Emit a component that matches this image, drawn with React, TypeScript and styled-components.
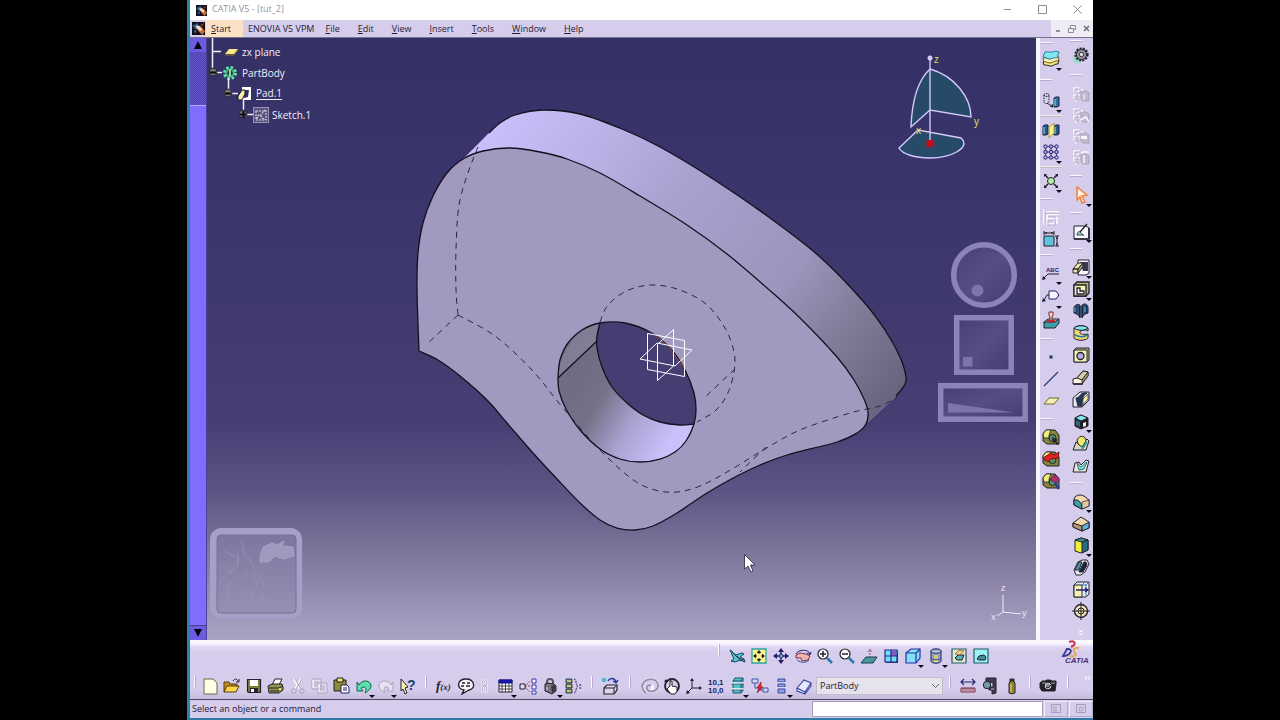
import React from "react";
import styled, { createGlobalStyle, css } from "styled-components";

type Pt = [number, number];

/* Smooth curve through a list of points, as cubic segments. */
const curve = (pts: Pt[], first = true): string => {
  let d = first ? `M${pts[0][0]} ${pts[0][1]}` : `L${pts[0][0]} ${pts[0][1]}`;
  for (let i = 0; i < pts.length - 1; i++) {
    const a = pts[i - 1] ?? pts[i];
    const b = pts[i];
    const c = pts[i + 1];
    const e = pts[i + 2] ?? c;
    const x1 = b[0] + (c[0] - a[0]) / 6;
    const y1 = b[1] + (c[1] - a[1]) / 6;
    const x2 = c[0] - (e[0] - b[0]) / 6;
    const y2 = c[1] - (e[1] - b[1]) / 6;
    d += `C${x1} ${y1} ${x2} ${y2} ${c[0]} ${c[1]}`;
  }
  return d;
};

const Global = createGlobalStyle`
  *, *::before, *::after { box-sizing: border-box; }
  body { margin: 0; background: #000; font-family: "Open Sans", "Noto Sans", sans-serif; color: #1c1833; }
  button, input, select { font: inherit; color: inherit; margin: 0; padding: 0; border: 0; border-radius: 0; background: none; }
`;

const lavender = "#d6cdec";

const Desktop = styled.div`
  min-height: 100vh;
  padding: 0 187px;
  display: flex;
  background: #000;
`;

const AppWindow = styled.div`
  flex: 1;
  min-width: 0;
  display: flex;
  flex-direction: column;
  background: ${lavender};
  border-left: 3px solid #2b83a6;
  border-bottom: 2px solid #2f7ba6;
  font-size: 9px;
  line-height: 12px;
`;

const TitleBar = styled.header`
  display: flex;
  align-items: center;
  height: 20px;
  padding-left: 6px;
  background: #fff;
  color: #95939b;
`;

const Title = styled.h1`
  flex: 1;
  margin: 0 0 2px 5px;
  font-size: 9px;
  line-height: 12px;
  font-weight: 400;
`;

const CaptionButton = styled.button`
  width: 32px;
  height: 18px;
  margin: 0 0 2px 3px;
  display: flex;
  align-items: center;
  justify-content: center;
`;

const MenuBar = styled.nav`
  display: flex;
  align-items: stretch;
  height: 18px;
  border-bottom: 1px solid #77708f;
`;

const MenuLogo = styled.span`
  width: 16px;
  display: flex;
  align-items: center;
  justify-content: center;
`;

const MenuItem = styled.button<{ $kind?: "start" | "wide" }>`
  padding: 0 9px;
  color: #221c38;
  ${(p) => p.$kind === "start" && css`padding: 0 12px 0 5px; background: #fbe2c4;`}
  ${(p) => p.$kind === "wide" && css`padding: 0 2px 0 5px;`}
`;

const MenuSpace = styled.span`
  flex: 1;
`;

const ChildButton = styled.button`
  width: 14px;
  background: #efecf6;
  display: flex;
  align-items: center;
  justify-content: center;
`;

const Work = styled.div`
  flex: 1;
  display: flex;
  min-height: 0;
`;

const TreeScroll = styled.div`
  width: 17px;
  display: flex;
  flex-direction: column;
  background: #806cff;
  border-right: 1px solid #4a4192;
`;

const ScrollButton = styled.button`
  height: 14px;
  display: flex;
  align-items: center;
  justify-content: center;
  background: #6b5ce0;
`;

const ScrollDither = styled.div`
  height: 54px;
  border-bottom: 1px solid #b8aeff;
  background: repeating-conic-gradient(#4b40a8 0 25%, #6456cf 0 50%) 0 0 / 2px 2px;
`;

const ScrollThumb = styled.div`
  flex: 1;
  border-bottom: 1px solid #4a4192;
`;

const Viewport = styled.main`
  flex: 1;
  min-width: 0;
  position: relative;
  background: linear-gradient(#353064 0%, #39346a 22%, #403a6f 48%, #463f74 64%, #5b5484 75%, #7c7499 85%, #a29bbd 97%, #a9a2c3 100%);
`;

const Scene = styled.svg`
  position: absolute;
  inset: 0;
  width: 100%;
  height: 100%;
`;

const Tree = styled.ul`
  position: absolute;
  top: 0;
  left: 0;
  margin: 0;
  padding: 3px 0 0;
  list-style: none;
  color: #f1eefb;
  font-size: 10px;
  line-height: 14px;
`;

const TreeLines = styled.svg`
  position: absolute;
  top: 0;
  left: 0;
`;

const TreeRow = styled.li<{ $indent: number }>`
  display: flex;
  align-items: center;
  gap: 3px;
  height: 21px;
  padding-left: ${(p) => p.$indent}px;
`;

const TreeLabel = styled.span<{ $current?: boolean }>`
  ${(p) => p.$current && css`border-bottom: 1px solid #f1eefb; line-height: 12px;`}
`;

const Side = styled.aside`
  display: flex;
  gap: 8px;
  padding-right: 1px;
  border-left: 4px solid #f7f5fd;
`;

const ToolColumn = styled.div`
  width: 22px;
  display: flex;
  flex-direction: column;
`;

const Tool = styled.button<{ $w?: number; $h?: number }>`
  position: relative;
  flex: none;
  width: ${(p) => p.$w ?? 22}px;
  height: ${(p) => p.$h ?? 22}px;
  display: flex;
  align-items: center;
  justify-content: center;
`;

const DropMark = styled.i`
  position: absolute;
  right: 0;
  bottom: -1px;
  border: 3px solid transparent;
  border-top-color: #0d0a1c;
  border-bottom: 0;
`;

const Grip = styled.div<{ $size: number; $across?: boolean }>`
  flex: none;
  display: flex;
  align-items: center;
  ${(p) =>
    p.$across
      ? css`height: ${p.$size}px;`
      : css`width: ${p.$size}px; justify-content: center; align-self: flex-start; padding-top: 4px;`}
  &::after {
    content: "";
    background: #fbfaff;
    ${(p) =>
      p.$across
        ? css`width: 12px; height: 2px; border-bottom: 1px solid #b5acd0;`
        : css`width: 2px; height: 12px; border-right: 1px solid #b5acd0;`}
  }
`;

const Rule = styled.div`
  flex: none;
  height: 1px;
  margin: 3px 0;
  background: #f3eadf;
  box-shadow: 0 1px 0 #c3b8cc;
`;

const Bottom = styled.div`
  display: flex;
  flex-direction: column;
  height: 59px;
  background: linear-gradient(#fdfcff 0, #f6f2fd 4px, #dfd7f2 7px, ${lavender} 12px, ${lavender} 50px, #c5bcdc 59px);
`;

const ToolRow = styled.div<{ $end?: boolean }>`
  display: flex;
  align-items: center;
  height: ${(p) => (p.$end ? 32 : 27)}px;
  ${(p) => p.$end && css`justify-content: flex-end; padding: 0 1px 0 0;`}
`;

const LogoSlot = styled.div`
  width: 100px;
  display: flex;
  justify-content: flex-end;
  align-self: flex-start;
`;

const Picker = styled.label`
  position: relative;
  display: flex;
  align-items: center;
  width: 127px;
  height: 18px;
  margin-left: 1px;
  border: 1px solid #c2bccf;
  background: #e7e3ec;
  svg { position: absolute; right: 2px; pointer-events: none; }
`;

const PickerSelect = styled.select`
  appearance: none;
  width: 100%;
  height: 100%;
  padding-left: 3px;
  font-size: 9px;
`;

const More = styled.span<{ $column?: boolean }>`
  display: flex;
  justify-content: center;
  ${(p) => (p.$column ? css`margin-top: 8px; transform: rotate(90deg);` : css`margin-left: auto; margin-right: 2px; margin-top: -16px;`)}
`;

const StatusBar = styled.footer`
  display: flex;
  align-items: center;
  height: 19px;
  padding-left: 2px;
  border-top: 1px solid #4d4663;
`;

const StatusText = styled.span`
  flex: 1;
`;

const CommandInput = styled.input`
  width: 231px;
  height: 16px;
  background: #fff;
  border: 1px solid #a8a0bd;
  padding: 0 3px;
`;

const StatusButton = styled.button`
  width: 24px;
  height: 16px;
  margin-left: 1px;
  border: 1px solid #b3aaca;
  border-top-color: #f2effa;
  border-left-color: #f2effa;
  display: flex;
  align-items: center;
  justify-content: center;
`;

const K = "#23212e";
const N = "#20206e";
const T = "#3f9fa6";
const C = "#7fe6f0";
const Y = "#f6f3b4";
const G = "#aba4bc";
const W = "#f8f6ff";

const greyBox = (extra: React.ReactNode) => (
  <g>
    <path d="M9 5h5l3 2v8h-6l-2-2z" fill="#c0b9cf" stroke={G} />
    <path d="M2 2h5v4H2zM7 4h4M4 6v9h5M2 9h5v3H2z" stroke={W} strokeWidth="1.6" />
    <path d="M3 3h5v4H3zM5 8v7h4M3 10h4v3H3z" stroke={G} strokeWidth=".8" />
    {extra}
  </g>
);

const bolt = (tip: React.ReactNode) => (
  <g>
    <path d="M1 6l3-4h9l4 5v9H5l-4-3z" fill="#84853a" stroke={K} />
    <path d="M1 6l3-4h5L7 7v3H2z" fill="#f2ee7a" stroke={K} strokeWidth=".8" />
    <circle cx="10.500" cy="10" r="3.500" fill="#5d8f69" stroke={K} />
    {tip}
  </g>
);

const icons: Record<string, React.ReactNode> = {
  layers: (<>
    <path d="M1 12c3-2 5 1 8-1s4-2 8-1l-1 4c-3-1-5 3-8 2s-4-1-6-1z" fill="#f7e783" stroke={K} />
    <path d="M1 8c3-1 5 2 8 0s4-2 8-1l-1 4c-3-1-5 2-8 2s-4-2-6-1z" fill={Y} stroke="#746220" />
    <path d="M3 2c3-1 5 1 7 0s4-1 7 0l-2 6c-3-1-4 1-7 1S4 7 1 7z" fill={C} stroke="#2b7da0" />
  </>),
  translate: (<>
    <path d="M2 3c0-2 5-2 5 0v7c0 2-5 2-5 0zM2 3c0 2 5 2 5 0" stroke={K} strokeDasharray="1.5 1" />
    <path d="M5 11l6 4M11 15l-3-1M11 15l-1-3" stroke={K} />
    <path d="M12 6l2-1h3v9l-2 1h-3z" fill="#2d6fa6" stroke={K} /><path d="M13 7v7" stroke={C} />
  </>),
  mirror: (<>
    <path d="M1 5l2-1h3v9l-2 1H1zM12 5l2-1h3v9l-2 1h-3z" fill="#225b94" stroke={K} />
    <path d="M2 6v7M13 6v7" stroke={C} /><path d="M7 6l5-4v10l-5 5z" fill="#f3ef8d" stroke="#a99d49" />
  </>),
  pattern: (<>
    <path d="M3.500 2v14M9 2v14M14.500 2v14M2 3.500h14M2 9h14M2 14.500h14" stroke={N} strokeWidth=".8" />
    {[3.5, 9, 14.5].map((x) => [3.5, 9, 14.5].map((y) => <circle key={x + "-" + y} cx={x} cy={y} r="1.700" fill="#b9b2e6" stroke={N} />))}
  </>),
  scale: (<>
    <path d="M3 3l3 3M15 3l-3 3M3 15l3-3M15 15l-3-3" stroke={K} strokeWidth="1.500" />
    <path d="M2 2h3L2 5zM16 2v3l-3-3zM2 16v-3l3 3zM16 16h-3l3-3z" fill={K} />
    <circle cx="9" cy="9" r="3.500" fill="#b5efa1" stroke={K} />
  </>),
  dimGrey: (<>
    <path d="M2 4h15M2 1v16M5 7h12M5 7v10M5 11h7v5H5zM15 8v8" stroke={W} strokeWidth="1.800" />
    <path d="M3 5h14M3 2v15M6 8h11M6 12h7v5H6z" stroke={G} strokeWidth=".8" />
  </>),
  dimension: (<>
    <path d="M2 6h10v10H2z" fill="#5fc3dc" stroke={K} /><path d="M2 1v4M12 1v4M2 3h10M13 6h4M13 16h4M15 6v10" stroke={K} />
    <path d="M2 3l3-1v2zM12 3l-3-1v2zM15 6l-1 3h2zM15 16l-1-3h2z" fill={K} />
  </>),
  abc: (<>
    <text x="4" y="9" fontSize="6" fill={N} fontFamily="Liberation Sans" fontWeight="700">ABC</text>
    <path d="M17 11H6l-4 4" stroke={K} /><path d="M0 17l1-4 3 3z" fill={K} />
  </>),
  flag: (<><path d="M7 4h7l3 4-3 4H7z" fill={W} stroke={N} /><path d="M7 8H5l-3 5" stroke={K} /><path d="M0 15l1-4 3 3z" fill={K} /></>),
  stamp: (<>
    <path d="M2 11l4-3h11l-4 4H2z" fill="#88d8df" stroke={K} /><path d="M2 11h11l4-3v4l-4 5H2z" fill={T} stroke={K} />
    <path d="M7 1h4v3l-1 2v4H8V6L7 4z" fill="#f7d7cf" stroke="#7d1c1c" /><path d="M5 10h8" stroke="#c62828" strokeWidth="2" />
  </>),
  point: <rect x="7.500" y="7.500" width="3" height="3" fill="#1c3566" />,
  line: <path d="M2 16L16 2" stroke="#22407a" strokeWidth="1.300" />,
  plane: <path d="M2 12l5-6h10l-5 6z" fill="#f5efb2" stroke="#6f6832" />,
  boltA: bolt(<path d="M10 9l6 3-2 1 3 3-2 1-2-3-2 1z" fill={K} />),
  boltB: bolt(<path d="M1 8l8-5 3 2 5-3-1 6-7 1-3 3z" fill="#dd2424" stroke="#7d1212" />),
  boltC: bolt(<><path d="M9 8c0-6 8-5 8-1s-5 4-8 1z" fill="#b92d60" stroke="#3c2b86" /><path d="M13 11l4 6" stroke="#2b3c9c" strokeWidth="2.500" /></>),
  gear: (<>
    <path d="M1 9h5l2 8H2z" fill="#8fe0c2" /><circle cx="9.500" cy="8.500" r="6" fill="#aaa6b0" stroke={K} strokeWidth="2.200" strokeDasharray="2 1.200" />
    <circle cx="9.500" cy="8.500" r="5" fill="#9c98a5" stroke={K} /><circle cx="9.500" cy="8.500" r="2.200" fill="#e9e6f0" stroke={K} />
  </>),
  greyA: greyBox(<path d="M12 8v6" stroke={W} />),
  greyB: greyBox(<path d="M8 13l6-3 3 5" stroke={W} strokeWidth="1.600" />),
  greyC: greyBox(<path d="M9 8h6v3H9z" fill={W} />),
  greyD: greyBox(<path d="M10 3h7M12 6v8" stroke={W} strokeWidth="1.500" />),
  select: <path d="M5 1l10 8-5 1 3 6-3 1-2-6-3 3z" fill="#fff1e4" stroke="#ef7f3b" strokeWidth="1.500" />,
  sketch: (<>
    <path d="M2 4h12l3 2v11H2z" fill={W} stroke={K} /><path d="M2 17h15V6" stroke={K} strokeWidth="1.600" />
    <path d="M5 13c0-4 3-4 4-2s3 2 3 2z" fill="#9bd0c0" stroke="#285b54" /><path d="M8 10l7-8" stroke={K} strokeWidth="1.400" />
  </>),
  pad: (<><path d="M6 2h11v13l-3 2H6z" fill={W} stroke={K} /><path d="M8 4h8v9h-5z" fill="#3a3954" /><path d="M1 11l5-6h5l-5 6zM1 11h5v4H1z" fill="#eeeab0" stroke={K} /><path d="M6 11l5-6v4l-5 6z" fill="#a7a36c" stroke={K} /></>),
  pocket: (<><path d="M2 5l3-3h12v11l-3 3H2z" fill="#b9b575" stroke={K} strokeWidth="1.300" /><path d="M2 5h12v11H2z" fill={Y} stroke={K} strokeWidth="1.300" /><path d="M5 8h3v3h4v3H5z" fill="#f8f6ff" stroke={K} strokeWidth="1.300" /></>),
  shaft: (<><path d="M2 5c2-3 4-3 6-2v13c-1-3-3-4-6-5zM10 3c3-2 5-1 6 2v6c-3 1-5 2-6 5z" fill="#2d5480" stroke={K} /><path d="M8 4v11M10 4v11M4 4v7M14 4v7" stroke="#0c1b33" /><path d="M3 5v5M13 5v5" stroke={C} strokeWidth=".8" /></>),
  groove: (<><path d="M2 4c3-3 11-3 14 0v3c-3-2-7-1-8 1s3 3 8 2v4c-3 3-11 3-14 0z" fill="#f3da74" stroke={K} /><path d="M2 4c3-3 11-3 14 0-3 3-11 3-14 0z" fill={C} stroke={K} /><path d="M3 11c4 2 9 2 12 0" stroke="#267f91" strokeWidth="1.600" /></>),
  hole: (<><path d="M2 4l2-2h13v12l-2 2H2z" fill="#b3b07a" stroke={K} /><path d="M2 4h13v12H2z" fill={Y} stroke={K} /><circle cx="8.500" cy="10" r="3.500" fill="#b2aedf" stroke={K} strokeWidth="1.300" /></>),
  rib: (<><path d="M1 11l4-1 6-7 5 1v4l-6 8H1z" fill="#fbf7e0" stroke={K} /><path d="M5 10l6-7 5 1-6 8z" fill="#d8cda0" stroke={K} /><path d="M10 12l6-8v4l-6 7z" fill="#a79d70" stroke={K} strokeWidth=".7" /><path d="M1 16h10" stroke={K} strokeWidth="1.500" /></>),
  slot: (<><path d="M1 8l7-6h9v8l-7 7H1z" fill="#e7e5ed" stroke={K} /><path d="M4 8c4 0 3-4 8-5h3c-4 2-4 5-5 8v5H6z" fill="#23375c" stroke={K} /><path d="M11 9l5-5v5l-5 6z" fill={Y} stroke={K} strokeWidth=".7" /></>),
  cube: (<><path d="M3 6l6-3 7 3v8l-7 3-6-3z" fill="#1c1b2c" stroke={K} /><path d="M3 6l6-3 7 3-7 3z" fill={C} stroke={K} /><path d="M4 8l4 2v5l-4-2z" fill="#2a6f74" /><path d="M11 11l3-1v4l-3 1z" fill="#f2efbc" /></>),
  loft: (<><path d="M1 16l3-8 4 3 7-6 2 2-3 9z" fill="#d9d6bd" stroke={K} /><path d="M5 6c3-6 9-4 9 1l-4 6-4-3z" fill="#f1e96d" stroke={K} /><path d="M10 15l5-7" stroke="#2f9aa6" strokeWidth="2" /></>),
  loftCut: (<><path d="M1 16l2-9 4-1 2 3 5-5 3 1-3 11z" fill="#eae7d2" stroke={K} /><path d="M5 7c2 0 2 4 4 4s4-5 6-5l-3 7-5 1z" fill={C} stroke="#26717d" /></>),
  fillet: (<><path d="M2 8c0-5 6-6 10-4l5 4v6l-7 3-8-4z" fill="#f4d7ab" stroke={K} /><path d="M2 8c4-1 8 2 8 9l-8-4z" fill={T} stroke={K} /><path d="M10 10l7-2v6l-7 3z" fill="#dfc79e" stroke={K} strokeWidth=".7" /></>),
  chamfer: (<><path d="M1 9l8-6 8 5v6l-7 3-9-4z" fill="#f4d7ab" stroke={K} /><path d="M1 9l9 3v5l-9-4z" fill="#b8966f" stroke={K} /><path d="M10 12l7-4v6l-7 3z" fill="#5eb3d3" stroke={K} /></>),
  draft: (<><path d="M3 4l6-2 7 2v10l-7 3-6-2z" fill="#f1ee33" stroke={K} /><path d="M3 4l6-2 7 2-6 2z" fill="#41979f" stroke={K} /><path d="M10 6l6-2v10l-6 3z" fill="#256f83" stroke={K} /></>),
  shell: (<><path d="M2 12l4-8 4-2h5l2 4-4 8-4 3H4z" fill="#eceaf2" stroke={K} /><path d="M3 12l4-8h3l-3 8z" fill={T} stroke={K} /><path d="M7 14l5-10h2l1 3-4 7z" fill="#251f43" stroke={K} /></>),
  thickness: (<><path d="M2 5l3-3h12v12l-3 3H2z" fill="#e9f0f4" stroke={K} /><path d="M2 5h8v12H2z" fill={Y} stroke={K} /><path d="M10 5h4v12M10 5l3-3M14 5l3-3" stroke="#4974a1" /><path d="M4 10h12M13 8l3 2-3 2" stroke={N} strokeWidth="1.300" /></>),
  target: (<><circle cx="9" cy="9" r="6.500" fill="#f6e6b6" stroke={K} strokeWidth="1.400" /><circle cx="9" cy="9" r="3" stroke={K} /><path d="M9 0v18M0 9h18" stroke={K} /></>),
  file: (<path d="M3 2h9l4 4v11H3z" fill="#fffde5" stroke="#6b683f" />),
  open: (<><path d="M1 15V5h5l1 2h7v3" fill="#c98a1b" stroke="#4d3d0c" /><path d="M1 15l3-6h12l-3 6z" fill="#ffd54c" stroke="#4d3d0c" /><path d="M10 4c2-3 4-2 5 0M16 2v3h-3" stroke={K} /></>),
  save: (<><path d="M2.500 2.500h13v13h-12l-1-1z" fill="#7a8035" stroke={K} strokeWidth="1.200" /><path d="M5 3h8v6H5z" fill="#fff" /><path d="M5 11h8v4H5z" fill={K} /><path d="M6 12h3v3H6z" fill="#fff" /></>),
  print: (<><path d="M5 8l3-6h7l-3 6z" fill="#fff" stroke={K} /><path d="M1 9l4-2h10l1 3v3l-4 3H2z" fill="#93954b" stroke={K} /><path d="M2 11h10l4-2M3 14h9" stroke={K} /><path d="M12 12h2" stroke="#ffe042" strokeWidth="2" /></>),
  cut: (<><path d="M5 2l6 10M12 2L6 12" stroke={W} strokeWidth="2.400" /><path d="M6 2l6 10M13 2L7 12" stroke={G} /><circle cx="5" cy="14" r="2.300" stroke={G} /><circle cx="13" cy="14" r="2.300" stroke={G} /></>),
  copy: (<><path d="M1 2h9v10H1zM7 6h9v10H7z" fill="#e4def0" stroke={G} /><path d="M3 5h5M3 7h4M3 9h3M9 9h5M9 11h5M9 13h5" stroke={G} /><path d="M2 3v8M8 7v8" stroke={W} /></>),
  paste: (<><path d="M1 3h12v11H1z" fill="#8c8c35" stroke={K} /><path d="M4 1h6v4H4z" fill="#f1e46f" stroke={K} /><path d="M8 8h6l2 2v6H8z" fill="#fff" stroke={N} /><path d="M10 11h4M10 13h4" stroke={N} /></>),
  undo: (<path d="M4 8c3-6 12-5 12 1 0 3-3 5-6 7 2-4 1-8-4-5l2 3H2V5z" fill="#5ce0ab" stroke="#16604b" />),
  redo: (<path d="M14 8C11 2 2 3 2 9c0 3 3 5 6 7-2-4-1-8 4-5l-2 3h6V5z" fill="#e8e2f3" stroke={G} />),
  help: (<><path d="M2 2l7 8-3 1 2 5-2 1-2-5-2 2z" fill={Y} stroke={K} /><text x="8" y="13" fontSize="14" fontWeight="700" fill="#1d416f" fontFamily="Liberation Sans">?</text></>),
  formula: (<text x="1" y="13" fontSize="13" fontStyle="italic" fontWeight="700" fill={K} fontFamily="Liberation Serif">f<tspan fontSize="9">(x)</tspan></text>),
  comment: (<><path d="M7 13C-1 12 0 2 9 2s10 10 3 11l-7 4z" fill="#f5f1f7" stroke={K} strokeWidth="1.300" /><path d="M5 6h3M10 6h3M4 9h3M9 9h4" stroke={K} strokeWidth="1.400" /></>),
  chain: (<><rect x="6" y="2" width="5" height="7" rx="2.500" stroke={W} strokeWidth="2.400" /><rect x="6" y="9" width="5" height="7" rx="2.500" stroke={W} strokeWidth="2.400" /><rect x="6" y="2" width="5" height="7" rx="2.500" stroke={G} /><rect x="6" y="9" width="5" height="7" rx="2.500" stroke={G} /></>),
  table: (<><path d="M3 3h13v12H3z" fill="#fff" stroke={K} /><path d="M3 3h13v3H3z" fill="#1717a6" stroke="#1717a6" /><path d="M3 9h13M3 12h13M6 6v9M9.500 6v9M13 6v9" stroke={K} strokeWidth=".8" /></>),
  structure: (<><path d="M1 7h5v5H1z" fill="#e4def0" stroke={K} /><path d="M6 9l5-5M6 9h5M6 10l5 5" stroke="#a83457" strokeDasharray="2 1" /><path d="M13 2h4v4h-4zM13 8h4v4h-4zM13 14h4v3h-4z" fill={W} stroke="#3838a8" /></>),
  lock: (<><path d="M5 8V5c0-4 6-4 6 0v3" stroke="#58545f" strokeWidth="2" /><path d="M3 7l3-1 6 1 2 2v5l-4 3-7-3z" fill="#77727c" stroke={K} /><path d="M9 9l4-1v6l-3 2z" fill="#3a363f" /><path d="M5 10v3" stroke="#e5e0ea" /></>),
  tree: (<><path d="M1 2h6v4H1zM1 7h6v4H1zM1 12h6v4H1z" fill="#619b9a" stroke={K} strokeWidth=".8" /><path d="M2 4h4M2 9h4M2 14h4" stroke="#ead564" strokeWidth="1.500" /><path d="M9 2c3 0 1 6 4 7-3 1-1 7-4 7M14 8h3M14 11h3" stroke={N} strokeDasharray="2 .700" /></>),
  rotateBox: (<><path d="M3 11l3-3h10v5l-3 4H3z" fill="#dcd6ea" stroke={K} strokeWidth="1.200" /><path d="M3 11h10v6M13 11l3-3" stroke={K} /><circle cx="3" cy="3" r="2.300" fill="#53b9ce" /><path d="M7 4c2-4 7-3 8 1M15 6l-3-2M15 6l2-3" stroke="#2c37a8" strokeWidth="1.400" /></>),
  swirl: (<><path d="M10 9c-2-2-5 0-4 3 2 4 10 3 11-3C17 2 8 0 3 5c-3 3-2 9 2 11M10 9c2 0 2 3 0 3" stroke={W} strokeWidth="3" /><path d="M10 9c-2-2-5 0-4 3 2 4 10 3 11-3C17 2 8 0 3 5c-3 3-2 9 2 11" stroke="#9991ab" strokeWidth="2" /></>),
  hand: (<><circle cx="9" cy="9" r="7" stroke={K} strokeWidth="1.800" /><path d="M7 9V4h2v5l5 1v4l-2 3H8l-4-5 1-1z" fill="#fff" stroke={K} /><path d="M1 5l2-3 2 3z" fill={K} /></>),
  axis: (<><path d="M7 2v9h9M7 11l-5 5" stroke={K} /><path d="M7 1L5 4h4zM17 11l-3-2v4zM1 17l1-4 3 3z" fill={K} /></>),
  numbers: (<text fontSize="8" fontFamily="Liberation Sans" fontWeight="700" fill={N}><tspan x="1" y="8">10,1</tspan><tspan x="1" y="16">10,0</tspan></text>),
  section: (<><path d="M4 4l2-3h8v12l-2 3H4z" fill="#4dc5cb" stroke="#225066" /><path d="M4 4h8v12M12 4l2-3" stroke="#225066" /><path d="M2 6h13M2 12h13" stroke={W} strokeWidth="1.300" /><path d="M2 7h13M2 13h13" stroke={K} strokeWidth=".5" /></>),
  flash: (<><path d="M1 2h6v4H1zM12 11h5v4h-5z" fill="#d7d8f3" stroke="#3d55a7" /><path d="M4 6v5h3M9 13h3" stroke="#3d55a7" /><path d="M10 5l-4 6h2l-2 5 6-6h-2z" fill="#dd2929" stroke="#8e1515" strokeWidth=".7" /></>),
  stack: (<><path d="M5 2h7v3H5zM5 7h7v3H5zM5 12h7v4H5z" fill="#8fa3df" stroke="#3d44a0" /><path d="M5 5.500h8M5 10.500h8" stroke={W} strokeWidth=".7" /></>),
  eraser: (<path d="M2 11L9 3l7 3-6 9zM2 11v3l8 3v-2M16 6v3l-6 8M2 11l8 4" fill="#e6e6fb" stroke="#3442a1" strokeWidth="1.100" />),
  ruler: (<><path d="M2 5h14M5 2L2 5l3 3M13 2l3 3-3 3" stroke="#26266e" strokeWidth="1.200" /><path d="M2 11h14v4H2z" fill="#f2c8ca" stroke="#69284b" /><path d="M4 11v3M6 11v3M8 11v3M10 11v3M12 11v3M14 11v3" stroke="#69284b" strokeWidth=".8" /></>),
  caliper: (<><path d="M5 1h10v15l-4 1v-4H8v-3h4V5L5 7z" fill="#3e3c48" stroke={K} /><circle cx="6" cy="8" r="3.700" fill="#7898ab" stroke={K} /><path d="M10 12h3" stroke="#b8b3c0" /></>),
  weight: (<><path d="M7 2h4v3H7z" fill="#585421" stroke={K} /><path d="M6 6l2-2h2l2 2v10c-2 1-4 1-6 0z" fill="#948431" stroke={K} /><path d="M8 7v8" stroke="#d6c96e" strokeWidth="1.300" /></>),
  camera: (<><path d="M1 6l2-2h3l2-1h3l2 1h4v3l-1 7H3L1 11z" fill="#242229" stroke={K} /><circle cx="9" cy="9" r="2.800" fill="#8a8690" stroke="#dcd8e3" /><path d="M7 10l2 1 3-3" stroke={K} /><path d="M3 6h4M12 6h4" stroke="#aaa6b1" /></>),
  fly: (<><path d="M2 3c2 0 3 4 6 5l6-2 2 1-4 3 4 2 1 3-5-2-5 2-4-1 3-2z" fill="#54c9d6" stroke="#12455c" /><path d="M4 5l6 6 6 2M9 9l4 5" stroke={K} strokeWidth=".8" /></>),
  fitAll: (<><path d="M2 2h14v14H2z" fill="#fbf788" stroke="#2ba3a3" strokeWidth="1.300" /><path d="M9 5v2M9 11v2M5 9h2M11 9h2" stroke={K} /><path d="M9 3L6.500 6h5zM9 15l-2.500-3h5zM3 9l3-2.500v5zM15 9l-3-2.500v5z" fill={K} /></>),
  pan: (<><path d="M9 2v14M2 9h14" stroke={N} strokeWidth="1.400" /><path d="M9 1L6 5h6zM9 17l-3-4h6zM1 9l4-3v6zM17 9l-4-3v6z" fill={N} /><circle cx="9" cy="9" r="2" fill="#7fb1d3" stroke={N} /></>),
  rotate: (<><path d="M2 7c2-5 13-5 14 0M16 8l-3-2M16 8l1-3" stroke={N} /><path d="M2 8l4-2 6 1 4 2-2 4-6 1-1-3-5 0z" fill="#ecb3aa" stroke="#813247" /><path d="M3 13c4 3 9 3 12 0" stroke="#3150a0" /></>),
  zoomIn: (<><circle cx="7" cy="7" r="5" fill="#fff" stroke={K} strokeWidth="1.200" /><path d="M4 7h6M7 4v6" stroke={K} strokeWidth="1.500" /><path d="M11 11l5 5" stroke="#287bb1" strokeWidth="2.500" /></>),
  zoomOut: (<><circle cx="7" cy="7" r="5" fill="#fff" stroke={K} strokeWidth="1.200" /><path d="M4 7h6" stroke={K} strokeWidth="1.500" /><path d="M11 11l5 5" stroke="#287bb1" strokeWidth="2.500" /></>),
  normal: (<><path d="M1 16l5-6h11l-4 6z" fill="#4a969e" stroke="#183e52" /><path d="M10 11V3M8 5l2-3 2 3" stroke="#9a497a" strokeDasharray="2 1" /></>),
  multi: (<><path d="M4 4h12v12H4z" fill="#45325f" /><path d="M3 3h12v12H3z" fill="#6ddff8" stroke="#202685" strokeWidth="1.200" /><path d="M9 4h5v5H9z" fill="#8a58c2" /><path d="M9 3v12M3 9h12" stroke="#202685" strokeWidth="1.200" /></>),
  iso: (<><path d="M2 6l5-4h9v9l-4 5H2z" fill="#86dff6" stroke="#2331a1" strokeWidth="1.200" /><path d="M2 6h10v10M12 6l4-4" stroke="#2331a1" strokeWidth="1.200" /></>),
  shading: (<><path d="M4 4c0-3 10-3 10 0v10c0 3-10 3-10 0z" fill="#8f9dc0" stroke="#222662" /><path d="M4 4c0 3 10 3 10 0" fill="#b5dbe6" stroke="#222662" /><path d="M7 8h4v7H7z" fill="#d6cd6c" /><path d="M4 11c0 2 10 2 10 0" stroke="#3a44ae" /></>),
  hide: (<><path d="M2 2h14v14H2z" fill="#e8e6ce" stroke="#1e5d6a" strokeWidth="1.200" /><path d="M5 11l3-3h6l-2 5H7z" fill="#4cb5bd" stroke={K} /><path d="M5 7l4-4 5 1-4 4z" fill="#f0cc8b" stroke="#7a5228" strokeWidth=".7" /></>),
  swap: (<><path d="M2 2h14v14H2z" fill="#9cf1f3" stroke="#1e5d6a" strokeWidth="1.200" /><path d="M5 12l2-3 5-1 2 2-1 3H7z" fill="#3f8f96" stroke={K} /></>),
};

const Icon = ({ name, size = 18 }: { name: string; size?: number }) => (
  <svg width={size} height={size} viewBox="0 0 18 18" fill="none" aria-hidden="true">{icons[name]}</svg>
);

interface Item { name: string; label: string; drop?: boolean; w?: number; h?: number; }
type Entry = Item | number | "rule";
const t = (name: string, label: string, drop = false, w?: number, h?: number): Item => ({ name, label, drop, w, h });

const Strip = ({ items, across }: { items: Entry[]; across?: boolean }) => (
  <>
    {items.map((it, i) => {
      if (it === "rule") return <Rule key={i} />;
      if (typeof it === "number") return <Grip key={i} $size={it} $across={across} />;
      return (
        <Tool key={i} type="button" aria-label={it.label} $w={it.w} $h={it.h}>
          <Icon name={it.name} />
          {it.drop && <DropMark />}
        </Tool>
      );
    })}
  </>
);

const leftTools: Entry[] = [
  10, t("layers", "Surface", true), 20, t("translate", "Translation", true), "rule",
  t("mirror", "Mirror"), t("pattern", "Rectangular pattern", true), "rule",
  t("scale", "Scaling", true), 14, t("dimGrey", "Constraint dialog"), t("dimension", "Constraint"), 10,
  t("abc", "Text with leader", true, 22, 24), t("flag", "Flag note", true, 22, 24), t("stamp", "Annotation", false, 22, 24), 14,
  t("point", "Point"), t("line", "Line"), t("plane", "Plane"), 14,
  t("boltA", "Assemble"), t("boltB", "Add"), t("boltC", "Remove"),
];

const rightTools: Entry[] = [
  6, t("gear", "Part design"), 18,
  t("greyA", "Catalog", false, 22, 21), t("greyB", "Copy part", false, 22, 21), t("greyC", "Paste part", false, 22, 21), t("greyD", "Link part", false, 22, 21), 16,
  t("select", "Select", true), 14, t("sketch", "Sketch", true), 14,
  t("pad", "Pad", true), t("pocket", "Pocket", true), t("shaft", "Shaft"), t("groove", "Groove"), t("hole", "Hole"),
  t("rib", "Rib"), t("slot", "Slot"), t("cube", "Solid combine", true), t("loft", "Loft"), t("loftCut", "Removed loft"), 14,
  t("fillet", "Edge fillet", true), t("chamfer", "Chamfer"), t("draft", "Draft angle", true), t("shell", "Shell"), t("thickness", "Thickness"), t("target", "Thread"),
];

const viewTools: Entry[] = [
  14, t("fly", "Fly mode"), t("fitAll", "Fit all in"), t("pan", "Pan"), t("rotate", "Rotate"), t("zoomIn", "Zoom in"), t("zoomOut", "Zoom out"),
  t("normal", "Normal view"), t("multi", "Multi view"), t("iso", "Isometric view", true), t("shading", "Shading", true, 24), t("hide", "Hide or show"), t("swap", "Swap visible space"),
];

const standardTools: Entry[] = [
  9, t("file", "New"), t("open", "Open"), t("save", "Save"), t("print", "Print"), t("cut", "Cut"), t("copy", "Copy"), t("paste", "Paste"),
  t("undo", "Undo", true), t("redo", "Redo", true), t("help", "What's this?"), 14,
  t("formula", "Formula"), t("comment", "Comment"), t("chain", "Link", false, 16), t("table", "Design table", true, 24), t("structure", "Knowledge"),
  t("lock", "Lock", true, 24), t("tree", "Equivalent dimensions"), 14, t("rotateBox", "Measure update"), 18,
  t("swirl", "Update all"), t("hand", "Manual update"), t("axis", "Axis system"), t("numbers", "Mean dimensions"), t("section", "Section", true),
  t("flash", "Constraint check"), t("stack", "Body list", true), t("eraser", "Only current body"),
];

const measureTools: Entry[] = [14, t("ruler", "Measure between"), t("caliper", "Measure item"), t("weight", "Measure inertia"), 14, t("camera", "Capture"), 18];

const menus = ["File", "Edit", "View", "Insert", "Tools", "Window", "Help"];

const Spark = ({ size }: { size: number }) => (
  <svg width={size} height={size} viewBox="0 0 14 14" aria-hidden="true">
    <rect width="14" height="14" fill="#10101f" />
    <path d="M0 4l6-3 2 4-4 3z" fill="#315c8e" /><path d="M5 4l5 1 4 5-3 4-4-4z" fill="#c9692f" />
    <path d="M4 4l4 0 3 4-2 2-4-3z" fill="#f5d7b5" /><path d="M9 3l4-2-2 4z" fill="#8d3920" /><path d="M2 10l3-2-1 4z" fill="#3c73a8" />
  </svg>
);

const back: Pt[] = [[462, 160], [480, 142], [489, 133], [500, 123], [515, 115], [543, 110], [580, 114], [622, 129], [660, 147], [710, 177], [770, 218], [820, 257], [863, 301], [885, 330], [900, 357], [906, 377], [904, 386], [896, 396]];
const face: Pt[] = [[419, 351], [417, 290], [418, 253], [423, 223], [433, 196], [447, 173], [463, 159], [483, 151], [510, 148], [540, 152], [567, 159], [600, 173], [640, 196], [687, 225], [727, 254], [767, 288], [800, 318], [837, 357], [854, 380], [864, 399], [868, 412], [866, 424], [857, 433], [837, 442], [787, 455], [760, 465], [737, 476], [707, 493], [677, 513], [653, 526], [635, 530], [617, 528], [600, 520], [580, 503], [557, 479], [533, 453], [507, 423], [487, 400], [460, 376], [438, 360], [419, 351]];
const rim: Pt[] = [[558, 378], [560, 360], [568, 343], [582, 330], [600, 323], [625, 323], [650, 332], [670, 348], [685, 370], [694, 393], [696, 410], [694, 424], [686, 441], [675, 452], [660, 459], [640, 462], [620, 459], [600, 449], [580, 430], [566, 409], [559, 391], [558, 378]];
const opening: Pt[] = rim.slice(4, 12);
const farRim: Pt[] = [[694, 424], [680, 425], [660, 422], [643, 415], [627, 403], [612, 387], [602, 367], [597, 348], [597, 336], [600, 323]];
const hidden: Pt[][] = [
  [[600, 322], [606, 308], [618, 296], [634, 288], [655, 285], [680, 290], [706, 304], [725, 328], [734, 352], [734, 372], [727, 395], [715, 411], [697, 422]],
  [[478, 147], [469, 170], [459, 205], [456, 250], [456, 290], [458, 315]],
  [[458, 315], [427, 344]],
  [[735, 369], [703, 399]],
  [[458, 315], [495, 336], [532, 370], [563, 408], [600, 450], [632, 479], [655, 490], [677, 492], [700, 486], [727, 472], [765, 449], [800, 430], [850, 413], [880, 406], [897, 397]],
  [[766, 447], [740, 472]],
];

const ModelScene = () => (
  <Scene viewBox="207 38 829 602" preserveAspectRatio="xMidYMid meet" fill="none" role="img" aria-label="Pad model with a through hole">
    <defs>
      <linearGradient id="side" gradientUnits="userSpaceOnUse" x1="500" y1="115" x2="890" y2="400">
        <stop offset="0" stopColor="#cabffa" /><stop offset=".2" stopColor="#bbb1e6" /><stop offset=".4" stopColor="#a9a0cf" />
        <stop offset=".68" stopColor="#9d95bd" /><stop offset=".84" stopColor="#817b98" /><stop offset="1" stopColor="#69647e" />
      </linearGradient>
      <linearGradient id="bore" gradientUnits="userSpaceOnUse" x1="572" y1="395" x2="665" y2="450">
        <stop offset="0" stopColor="#716c84" /><stop offset=".25" stopColor="#777189" /><stop offset=".6" stopColor="#aaa0d0" /><stop offset="1" stopColor="#cbc0fa" />
      </linearGradient>
      <linearGradient id="glass" x1="0" y1="0" x2="1" y2="1">
        <stop offset="0" stopColor="#463f75" /><stop offset=".5" stopColor="#564e82" /><stop offset="1" stopColor="#443d73" />
      </linearGradient>
      <linearGradient id="tile" x1="0" y1="0" x2="0" y2="1">
        <stop offset="0" stopColor="#7e769f" /><stop offset="1" stopColor="#9790b4" />
      </linearGradient>
    </defs>

    <path d={curve(back) + "L868 422L700 330L470 200Z"} fill="url(#side)" />
    <path d={curve(face) + "Z"} fill="#a299c0" />
    <path d={curve(rim) + "Z"} fill="url(#bore)" />
    <path d="M558 378C560 350 576 330 599 323L597 341Z" fill="#827d94" />
    <path d={curve(opening) + curve(farRim, false) + "Z"} fill="#453e72" />
    <g stroke="#14101f" strokeWidth="1.300">
      <path d={curve(back.slice(2))} /><path d={curve(face)} /><path d={curve(rim)} /><path d={curve(farRim)} /><path d="M558 378L597 341" />
    </g>
    <path d="M896 396L868 422" stroke="#7b728f" />
    <g stroke="#2b263b" strokeDasharray="6 5">{hidden.map((h, i) => <path key={i} d={curve(h)} />)}</g>
    <path d="M655 335L668 346L684 368" stroke="#b9693d" strokeWidth=".8" />
    <path d="M647.500 333.500L684.500 340.500V376.500L647.500 369.500ZM640 359L657 343L692 350L675 366ZM657.500 344.500L673.500 329.500V366L657.500 380.500Z" stroke="#fff" />

    <g stroke="#d3c9fa" strokeWidth="1.400">
      <path d="M930 69C955 76 971 98 971 117L930 110L911 127C912 100 918 80 930 69Z" fill="#264a68" />
      <path d="M899 148L918 130L961 138C972 148 950 158 930 158C915 158 902 154 899 148Z" fill="#264a68" />
      <path d="M930 58V143" />
    </g>
    <circle cx="930" cy="58" r="2.500" fill="#d3c9fa" /><rect x="926.500" y="140" width="7" height="7" fill="#c20d18" />
    <g fill="#e8e35b" fontFamily="Open Sans, sans-serif" fontSize="10"><text x="934" y="63">z</text><text x="974" y="125">y</text><text x="916" y="134">x</text></g>

    <g stroke="#8c84b8" strokeWidth="5.500" fill="url(#glass)">
      <circle cx="984" cy="275" r="30.300" /><rect x="956.700" y="317.700" width="54.500" height="54.500" /><rect x="940.700" y="385.700" width="84.500" height="33.500" />
    </g>
    <g fill="#7d75a8"><circle cx="977.500" cy="290.500" r="6" /><rect x="963" y="357" width="9.500" height="9.500" /><path d="M948 403L1014 412.500H948Z" /></g>

    <rect x="213.500" y="531.500" width="85" height="84" rx="8" fill="#8c85ad" stroke="#a79fc8" strokeWidth="7" />
    <rect x="217" y="535" width="79" height="78" rx="4" fill="url(#tile)" stroke="#77709a" />
    <path d="M260 556l3-9 9-4 5 2 7-4-2 5 11 1 1 9-11 3-8-3-6 6h-9z" fill="#a099bf" stroke="#b0a9cc" strokeWidth=".7" />
    <path d="M220 583c8-18 19-5 18-24s12-5 16 10M224 551l15 7-9 15M240 542c8 8 0 11 7 16M227 604c4-10-5-14 4-22s14-1 17-12M252 609c-8-17 10-16 3-29s7-5 8 6M240 596c7 0 6-8 12-6M262 594l6 13M221 565c6 1 4 6 9 6" stroke="#9f98bd" strokeWidth=".6" />

    <path d="M1003 595V612L1021 614M1003 612L997 616" stroke="#eeebfa" />
    <g fill="#eeebfa" fontFamily="Open Sans, sans-serif" fontSize="9"><text x="1001" y="591">z</text><text x="1022" y="616">y</text><text x="991" y="620">x</text></g>
    <path d="M744.500 554.500V569L748 566L751 572L753 571L750.500 565H755Z" fill="#fff" stroke="#25203a" strokeWidth=".8" />
  </Scene>
);

const SpecTree = () => (
  <Tree>
    <TreeLines width="60" height="84" viewBox="0 0 60 84" fill="none" aria-hidden="true">
      <path d="M5.500 0V33M5 13.500H14M6 34.500H15M21.500 40V54M21 55.500H31M36.500 61V75M36 76.500H46" stroke="#f1eefb" strokeWidth="1.500" />
      <g fill="#77737e" stroke="#2b2736"><circle cx="6" cy="34" r="4" /><circle cx="21" cy="55" r="4" /><circle cx="36" cy="76" r="4" /></g>
      <path d="M3 34.500H9M18 55.500H24M33 76.500H39M36.500 73V80" stroke="#0c0a12" strokeWidth="2" />
    </TreeLines>
    <TreeRow $indent={16}>
      <svg width="16" height="14" viewBox="0 0 16 14" aria-hidden="true"><path d="M2 9l4-5h9l-4 5z" fill="#f7e987" /><path d="M2 10h9l4-5" fill="none" stroke="#8a7525" /></svg>
      <TreeLabel>zx plane</TreeLabel>
    </TreeRow>
    <TreeRow $indent={16}>
      <svg width="16" height="16" viewBox="0 0 16 16" fill="none" aria-hidden="true">
        <circle cx="7" cy="8" r="5.500" fill="#1f6b55" stroke="#5fe3a5" strokeWidth="3" strokeDasharray="2.500 1.800" />
        <circle cx="7" cy="8" r="3.500" fill="#17362e" stroke="#6fe0ae" /><path d="M7 5v6" stroke="#d4ffe9" strokeWidth="1.500" />
      </svg>
      <TreeLabel>PartBody</TreeLabel>
    </TreeRow>
    <TreeRow $indent={30}>
      <svg width="16" height="16" viewBox="0 0 16 16" aria-hidden="true"><path d="M5 1h9v13H5z" fill="#fff" /><path d="M7 4h5l-1 7-4 1z" fill="#332e62" /><path d="M1 10l4-6h3v4l-3 6H1z" fill="#f6edad" stroke="#15131f" /></svg>
      <TreeLabel $current>Pad.1</TreeLabel>
    </TreeRow>
    <TreeRow $indent={46}>
      <svg width="16" height="16" viewBox="0 0 16 16" fill="none" aria-hidden="true"><rect x=".500" y=".500" width="15" height="15" fill="#5a547c" stroke="#e8e4f5" strokeDasharray="1 1" /><path d="M3 4h10v9H3zM4 12c0-5 4-5 5-1l4 2M7 9l6-7" stroke="#cfcbdd" strokeWidth="1.200" strokeDasharray="2 1" /></svg>
      <TreeLabel>Sketch.1</TreeLabel>
    </TreeRow>
  </Tree>
);

const Chevrons = () => (
  <svg width="6" height="6" viewBox="0 0 6 6" fill="none" stroke="#fff" aria-hidden="true"><path d="M0 1l2 2-2 2M3 1l2 2-2 2" /></svg>
);

export default function App() {
  return (
    <>
      <Global />
      <Desktop>
        <AppWindow>
          <TitleBar>
            <Spark size={11} />
            <Title>CATIA V5 - [tut_2]</Title>
            <CaptionButton aria-label="Minimize"><svg width="9" height="9"><path d="M1 4.500h7" stroke="#8d8b92" /></svg></CaptionButton>
            <CaptionButton aria-label="Maximize"><svg width="9" height="9"><path d="M.500.500h8v8h-8z" fill="none" stroke="#8d8b92" /></svg></CaptionButton>
            <CaptionButton aria-label="Close"><svg width="9" height="9"><path d="M.500.500l8 8M8.500.500l-8 8" stroke="#8d8b92" /></svg></CaptionButton>
          </TitleBar>
          <MenuBar>
            <MenuLogo><Spark size={13} /></MenuLogo>
            <MenuItem $kind="start"><u>S</u>tart</MenuItem>
            <MenuItem $kind="wide">ENOVIA V5 VPM</MenuItem>
            {menus.map((m) => <MenuItem key={m}><u>{m[0]}</u>{m.slice(1)}</MenuItem>)}
            <MenuSpace />
            <ChildButton aria-label="Minimize document"><svg width="7" height="8"><path d="M1 6h4" stroke="#6f6a7d" strokeWidth="1.500" /></svg></ChildButton>
            <ChildButton aria-label="Restore document"><svg width="8" height="8" fill="none"><path d="M2.500 3V.500h5v4H6M.500 3.500h5v4h-5z" stroke="#8f8a9c" /></svg></ChildButton>
            <ChildButton aria-label="Close document"><svg width="7" height="7"><path d="M1 1l5 5M6 1L1 6" stroke="#6b6575" strokeWidth="1.300" /></svg></ChildButton>
          </MenuBar>
          <Work>
            <TreeScroll>
              <ScrollButton aria-label="Scroll up"><svg width="10" height="10"><path d="M5 1l4 8H1z" fill="#06040f" /></svg></ScrollButton>
              <ScrollDither />
              <ScrollThumb />
              <ScrollButton aria-label="Scroll down"><svg width="10" height="10"><path d="M5 9l4-8H1z" fill="#06040f" /></svg></ScrollButton>
            </TreeScroll>
            <Viewport>
              <ModelScene />
              <SpecTree />
            </Viewport>
            <Side>
              <ToolColumn><Strip items={leftTools} across /></ToolColumn>
              <ToolColumn><Strip items={rightTools} across /><More $column><Chevrons /></More></ToolColumn>
            </Side>
          </Work>
          <Bottom>
            <ToolRow $end>
              <Strip items={viewTools} />
              <LogoSlot>
                <svg width="34" height="26" viewBox="0 0 34 26" fill="none" aria-label="CATIA" role="img">
                  <path d="M11 2c6-2 8 2 2 5" stroke="#c8324b" strokeWidth="2" />
                  <path d="M8 9h2c6 0 2 7-5 7l4-7" stroke="#3b3a92" strokeWidth="1.800" />
                  <path d="M21 8c-7-1-6 3-4 5s0 4-5 3" stroke="#e7a444" strokeWidth="1.800" />
                  <text x="7" y="23" fontSize="8" fontStyle="italic" fontWeight="700" fontFamily="Liberation Sans" fill="#44327e">CATIA</text>
                </svg>
              </LogoSlot>
            </ToolRow>
            <ToolRow>
              <Strip items={standardTools} />
              <Picker>
                <PickerSelect aria-label="In work object" defaultValue="PartBody"><option>PartBody</option></PickerSelect>
                <svg width="9" height="6" fill="none"><path d="M1 1l3.500 3.500L8 1" stroke="#6b6675" /></svg>
              </Picker>
              <Strip items={measureTools} />
              <More><Chevrons /></More>
            </ToolRow>
          </Bottom>
          <StatusBar>
            <StatusText>Select an object or a command</StatusText>
            <CommandInput aria-label="Power input" />
            <StatusButton aria-label="Power input mode"><svg width="12" height="10" fill="none" stroke="#a59db8"><path d="M1.500.500h9v8h-9zM3 3h4M3 5h4M3 7h4" /></svg></StatusButton>
            <StatusButton aria-label="Dialog display"><svg width="12" height="10" fill="none" stroke="#a59db8"><path d="M1.500.500h9v8h-9z" /><circle cx="6" cy="5" r="2" /></svg></StatusButton>
          </StatusBar>
        </AppWindow>
      </Desktop>
    </>
  );
}
